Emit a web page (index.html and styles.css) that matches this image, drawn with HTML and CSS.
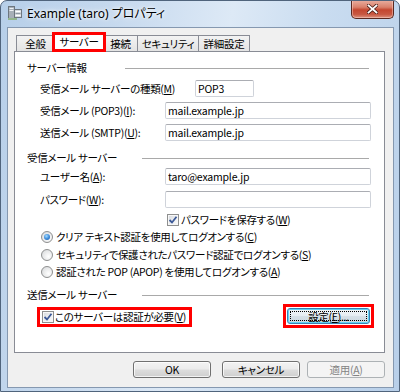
FILE: index.html
```html
<!DOCTYPE html>
<html lang="ja">
<head>
<meta charset="utf-8">
<title>Example (taro) プロパティ</title>
<link rel="stylesheet" href="styles.css">
</head>
<body>
<div class="window">
  <div class="titlebar">
    <svg class="app-icon" width="16" height="16" viewBox="0 0 16 16">
      <rect x="1.5" y="1.5" width="6" height="12" fill="#a7afb7" stroke="#6d767f"/>
      <rect x="2.5" y="3" width="4" height="1" fill="#eef1f4"/>
      <rect x="2.5" y="5" width="4" height="1" fill="#eef1f4"/>
      <rect x="7.5" y="4.5" width="7" height="8" fill="#d3d8dd" stroke="#6d767f"/>
      <rect x="8.5" y="6" width="5" height="1" fill="#ffffff"/>
      <rect x="8.5" y="8" width="5" height="1" fill="#8f98a1"/>
      <rect x="8.5" y="10" width="5" height="1" fill="#ffffff"/>
      <rect x="1" y="13" width="9" height="2" fill="#93b58c"/>
    </svg>
    <span class="title">Example (taro) プロパティ</span>
    <div class="close-btn">
      <svg width="11" height="10" viewBox="0 0 11 10">
        <path d="M1.5 1.5 L9.5 8.5 M9.5 1.5 L1.5 8.5" stroke="#4a1e18" stroke-width="3.4" stroke-linecap="square"/>
        <path d="M1.5 1.5 L9.5 8.5 M9.5 1.5 L1.5 8.5" stroke="#ffffff" stroke-width="1.8" stroke-linecap="square"/>
      </svg>
    </div>
  </div>
  <div class="client">
    <div class="tabs">
      <div class="tab t1">全般</div>
      <div class="tab t2 active">サーバー</div>
      <div class="tab t3">接続</div>
      <div class="tab t4">セキュリティ</div>
      <div class="tab t5">詳細設定</div>
    </div>
    <div class="panel">
      <div class="group-head"><span class="gh-label w1">サーバー情報</span><span class="rule"></span></div>
      <div class="row"><span class="lbl wide">受信メール サーバーの種類(<u>M</u>)</span><input class="tb short" type="text" value="POP3" readonly></div>
      <div class="row"><span class="lbl">受信メール (POP3)(<u>I</u>):</span><input class="tb long" type="text" value="mail.example.jp" readonly></div>
      <div class="row"><span class="lbl">送信メール (SMTP)(<u>U</u>):</span><input class="tb long" type="text" value="mail.example.jp" readonly></div>

      <div class="group-head g2"><span class="gh-label w2">受信メール サーバー</span><span class="rule"></span></div>
      <div class="row user"><span class="lbl">ユーザー名(<u>A</u>):</span><input class="tb long" type="text" value="taro@example.jp" readonly></div>
      <div class="row pass"><span class="lbl">パスワード(<u>W</u>):</span><input class="tb long" type="text" value="" readonly></div>
      <div class="check-row">
        <span class="cb"><svg width="10" height="10" viewBox="0 0 10 10"><path d="M1.5 5 L4 7.5 L8.5 1.8" fill="none" stroke="#3d5a98" stroke-width="1.8"/></svg></span>
        <span>パスワードを保存する(<u>W</u>)</span>
      </div>
      <div class="radio-row r1"><span class="rb on"></span><span>クリア テキスト認証を使用してログオンする(<u>C</u>)</span></div>
      <div class="radio-row r2"><span class="rb"></span><span>セキュリティで保護されたパスワード認証でログオンする(<u>S</u>)</span></div>
      <div class="radio-row r3"><span class="rb"></span><span>認証された POP (APOP) を使用してログオンする(<u>A</u>)</span></div>

      <div class="group-head g3"><span class="gh-label w2">送信メール サーバー</span><span class="rule"></span></div>
      <div class="bottom-row">
        <div class="hl check-hl">
          <span class="cb"><svg width="10" height="10" viewBox="0 0 10 10"><path d="M1.5 5 L4 7.5 L8.5 1.8" fill="none" stroke="#3d5a98" stroke-width="1.8"/></svg></span>
          <span>このサーバーは認証が必要(<u>V</u>)</span>
        </div>
        <div class="hl btn-hl">
          <button class="btn focused" type="button"><span class="focus-rect">設定(<u>E</u>)...</span></button>
        </div>
      </div>
    </div>
    <div class="dlg-buttons">
      <button class="btn ok" type="button">OK</button>
      <button class="btn cancel" type="button">キャンセル</button>
      <button class="btn disabled" type="button">適用(<u>A</u>)</button>
    </div>
  </div>
</div>
</body>
</html>
```

FILE: styles.css
```css
html, body {
  margin: 0;
  padding: 0;
  background: #ffffff;
}
body {
  width: 400px;
  height: 392px;
  overflow: hidden;
  font-family: "Noto Sans CJK JP", sans-serif;
  font-size: 10.5px;
  letter-spacing: -0.3px;
  color: #000;
  font-feature-settings: "palt";
}
u { text-decoration: underline; text-underline-offset: 1px; }

.window {
  box-sizing: border-box;
  width: 400px;
  height: 392px;
  border: 1px solid #50647c;
  border-radius: 7px 7px 0 0;
  background: linear-gradient(100deg, #b7cfe9 0%, #c6d9ee 25%, #dde9f6 50%, #c9dcf0 70%, #b8cfe9 100%);
  display: flex;
  flex-direction: column;
  overflow: hidden;
}
.titlebar {
  height: 26px;
  flex: none;
  display: flex;
  align-items: flex-start;
}
.app-icon {
  margin: 4px 0 0 6px;
  flex: none;
}
.title {
  margin: 5px 0 0 4px;
  font-family: "Noto Sans", "Noto Sans CJK JP", sans-serif;
  font-size: 12px;
  letter-spacing: 0;
  line-height: 15px;
  color: #000;
  white-space: nowrap;
  text-shadow: 0 0 6px #fff, 0 0 3px #fff;
}
.close-btn {
  margin: -1px 5px 0 auto;
  width: 43px;
  height: 19px;
  flex: none;
  box-sizing: border-box;
  border: 1px solid #5a2820;
  border-top: none;
  border-radius: 0 0 5px 5px;
  background: linear-gradient(#eab0a2 0%, #d9806b 40%, #c4462f 55%, #c85842 80%, #dd927f 100%);
  box-shadow: inset 0 0 0 1px rgba(255, 220, 210, 0.45);
  display: flex;
  align-items: center;
  justify-content: center;
}

.client {
  flex: 1;
  margin: 0 5px 3px 6px;
  background: #f0f0f0;
  border: 1px solid #8598b0;
  padding: 0 8px 0 6px;
  display: flex;
  flex-direction: column;
}

.tabs {
  flex: none;
  display: flex;
  align-items: flex-end;
  height: 19px;
  margin-top: 4px;
  padding-left: 2px;
}
.tab {
  box-sizing: border-box;
  height: 16px;
  border: 1px solid #898c95;
  border-bottom: none;
  background: linear-gradient(#f3f3f3, #e3e3e3);
  display: flex;
  align-items: center;
  justify-content: center;
  line-height: 14px;
  white-space: nowrap;
}
.t1 { width: 39px; }
.t2 {
  width: 54px;
  height: 20px;
  margin-left: -3px;
  margin-right: -2px;
  margin-bottom: -1px;
  border: 3px solid #ff0000;
  border-bottom: 3px solid #ff0000;
  background: #ffffff;
  position: relative;
  z-index: 1;
}
.t3 { width: 35px; margin-left: -1px; }
.t4 { width: 62px; margin-left: -1px; }
.t5 { width: 52px; margin-left: -1px; }

.panel {
  flex: none;
  box-sizing: border-box;
  height: 302px;
  border: 1px solid #898c95;
  background: #ffffff;
  padding: 0 15px 0 12px;
}

.group-head {
  display: flex;
  align-items: center;
  height: 14px;
  line-height: 14px;
  margin-top: 9px;
}
.g2 { margin-top: 10px; }
.g3 { margin-top: 9px; }
.gh-label { flex: none; white-space: nowrap; }
.w1 { width: 98px; }
.w2 { width: 115px; }
.rule {
  flex: 1;
  height: 1px;
  background: #a9a9a9;
}

.row {
  display: flex;
  align-items: center;
  height: 17px;
  margin-top: 5px;
  padding-left: 13px;
}
.row.user { margin-top: 3px; }
.row.pass { margin-top: 6px; }
.lbl {
  flex: none;
  width: 125px;
  white-space: nowrap;
  line-height: 14px;
}
.lbl.wide { width: 155px; }

.tb {
  box-sizing: border-box;
  height: 17px;
  margin: 0;
  padding: 0 2px;
  border: 1px solid #cfd3da;
  border-top-color: #abadb3;
  border-radius: 2px;
  background: #ffffff;
  color: #000;
  font: 10.5px "Noto Sans CJK JP", sans-serif;
  letter-spacing: -0.2px;
  outline: none;
  flex: none;
}
.short { width: 59px; }
.long { width: 206px; }

.check-row {
  display: flex;
  align-items: center;
  gap: 2px;
  height: 14px;
  margin-top: 5px;
  margin-left: 140px;
  white-space: nowrap;
  line-height: 14px;
}

.radio-row {
  display: flex;
  align-items: center;
  gap: 3px;
  height: 14px;
  padding-left: 14px;
  white-space: nowrap;
  line-height: 14px;
}
.r1 { margin-top: 3px; }
.r2 { margin-top: 4px; }
.r3 { margin-top: 3px; }

.cb {
  box-sizing: border-box;
  width: 12px;
  height: 12px;
  flex: none;
  border: 1px solid #8e8f8f;
  background: linear-gradient(135deg, #d6d9dd 0%, #eef0f2 60%, #fafafa 100%);
  box-shadow: inset 0 0 0 1px #f7f7f7;
  display: flex;
  align-items: center;
  justify-content: center;
}
.rb {
  box-sizing: border-box;
  width: 12px;
  height: 12px;
  flex: none;
  border-radius: 50%;
  border: 1px solid #8e8f8f;
  background: radial-gradient(circle at 65% 65%, #ffffff 0%, #e6e7e8 60%, #cdd0d4 100%);
  display: flex;
  align-items: center;
  justify-content: center;
}
.rb.on::after {
  content: "";
  width: 6px;
  height: 6px;
  border-radius: 50%;
  background: radial-gradient(circle at 40% 35%, #a4dcff 0%, #3f8ddb 50%, #1b55a0 100%);
}

.bottom-row {
  display: flex;
  justify-content: space-between;
  align-items: flex-start;
  height: 24px;
  margin-top: 2px;
  margin-left: 10px;
  margin-right: -5px;
}
.hl {
  box-sizing: border-box;
  border: 3px solid #ff0000;
}
.check-hl {
  margin-top: 3px;
  width: 155px;
  height: 20px;
  display: flex;
  align-items: center;
  gap: 1px;
  padding: 0 2px;
  white-space: nowrap;
  line-height: 14px;
}
.btn-hl {
  width: 91px;
  height: 24px;
  padding: 1px;
  display: flex;
}

.btn {
  box-sizing: border-box;
  width: 78px;
  height: 17px;
  margin: 0;
  padding: 0;
  border: 1px solid #707070;
  border-radius: 3px;
  background: linear-gradient(#f3f3f3 0%, #ebebeb 48%, #dddddd 52%, #cfcfcf 100%);
  box-shadow: inset 0 0 0 1px rgba(255, 255, 255, 0.75);
  font: 10.5px "Noto Sans CJK JP", sans-serif;
  font-feature-settings: "palt";
  letter-spacing: -0.3px;
  line-height: 13px;
  color: #000;
  display: flex;
  align-items: center;
  justify-content: center;
  white-space: nowrap;
}
.btn.focused {
  width: 100%;
  height: 100%;
  border-color: #3c7fb1;
  box-shadow: inset 0 0 0 1px #5fd3f6;
  background: linear-gradient(#f1f5f8 0%, #e6edf2 48%, #d7e1e8 52%, #cdd8e0 100%);
  padding: 2px;
}
.focus-rect {
  flex: 1;
  align-self: stretch;
  border: 1px dotted #000;
  display: flex;
  align-items: center;
  justify-content: center;
}

.dlg-buttons {
  flex: none;
  display: flex;
  justify-content: flex-end;
  margin-top: 8px;
}
.btn.ok { margin-right: 11px; }
.btn.cancel { margin-right: 7px; }
.btn.disabled {
  border-color: #adb2b5;
  background: #f4f4f4;
  box-shadow: none;
  color: #838383;
}
```
